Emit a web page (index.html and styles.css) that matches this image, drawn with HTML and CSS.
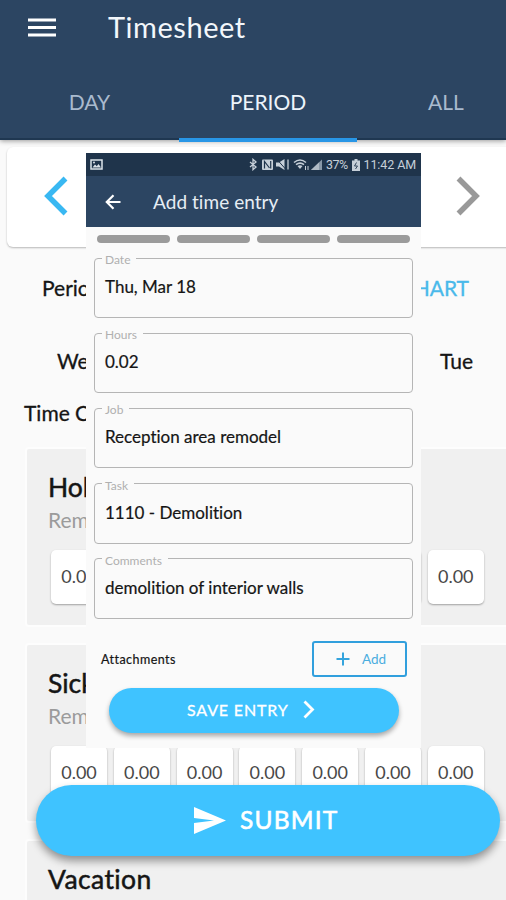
FILE: index.html
```html
<!DOCTYPE html>
<html lang="en">
<head>
<meta charset="utf-8">
<title>Timesheet</title>
<link rel="stylesheet" href="styles.css">
</head>
<body>
<div class="screen">
  <header class="header">
    <div class="titlebar">
      <svg class="menu" viewBox="0 0 28 20"><path d="M0 2h28M0 9.500h28M0 17h28" stroke="#fff" stroke-width="3"/></svg>
      <h1 class="title">Timesheet</h1>
    </div>
    <nav class="tabs">
      <span class="tab">DAY</span>
      <span class="tab active">PERIOD</span>
      <span class="tab">ALL</span>
    </nav>
  </header>

  <section class="pager">
    <svg class="chev" viewBox="0 0 24 40"><path d="M21.500 2.500L4 20l17.500 17.500" fill="none" stroke="#39b8f2" stroke-width="5.500"/></svg>
    <svg class="chev" viewBox="0 0 24 40"><path d="M2.500 2.500L20 20L2.500 37.500" fill="none" stroke="#999" stroke-width="5.500"/></svg>
  </section>

  <div class="summary"><span class="period">Perio</span><span class="chart">HART</span></div>
  <div class="days"><span class="wed">We</span><span class="tue">Tue</span></div>
  <div class="code">Time C</div>

  <section class="card">
    <h2 class="name">Hol</h2>
    <p class="remain">Rem</p>
    <div class="cells"><span>0.00</span><span></span><span></span><span></span><span></span><span></span><span>0.00</span></div>
  </section>
  <section class="card">
    <h2 class="name">Sick</h2>
    <p class="remain">Rem</p>
    <div class="cells"><span>0.00</span><span>0.00</span><span>0.00</span><span>0.00</span><span>0.00</span><span>0.00</span><span>0.00</span></div>
  </section>
  <section class="card">
    <h2 class="name wide">Vacation</h2>
  </section>

  <section class="entry">
    <div class="status">
      <svg class="pic" viewBox="0 0 13 11"><rect x="1" y="1" width="11" height="9" fill="none" stroke="#dce3ea" stroke-width="1.500"/><path d="M2.500 8.500L5 5.500l1.800 1.700L8.500 5l2.500 3.500z" fill="#dce3ea"/><circle cx="4" cy="3.500" r="1" fill="#dce3ea"/></svg>
      <svg class="sysicons" viewBox="0 0 74 13">
        <g fill="none" stroke="#c6cfd8" stroke-width="1.300">
          <path d="M1 4l6 5-3 2.700V1.300L7 4 1 9"/>
          <path d="M39 1.500v10"/>
          <path d="M45 4.500q6-5 12 0M47 6.700q4-3.300 8 0" stroke-width="1.600"/>
          <path d="M56.500 8v4M59 8v4" stroke-width="1"/>
        </g>
        <rect x="13" y="1.500" width="11" height="10.500" rx="1" fill="#c6cfd8"/>
        <path d="M15.500 10.500V3.500l5 6.500M21.700 3v7.500" fill="none" stroke="#1f344b" stroke-width="1.200"/>
        <path d="M27 4.500h3L35.500 1v11L30 8.500h-3zM48.500 8q2.500-1.500 5 0L51 11z" fill="#c6cfd8"/>
        <path d="M28 1.500l9 10" stroke="#1f344b" stroke-width="1"/>
        <path d="M73 1.500V12H62z" fill="#8797a7"/><path d="M70 4.500V12h-8z" fill="#b0bbc6"/>
      </svg>
      <span class="stat pct">37%</span>
      <svg class="batt" viewBox="0 0 8 12"><path d="M0 1.500h2.500V0h3v1.500H8V12H0z" fill="#c6cfd8"/><path d="M4.500 3.500L2.500 7h3l-2 3" fill="none" stroke="#33475c"/></svg>
      <span class="stat">11:42 AM</span>
    </div>
    <div class="appbar">
      <svg class="back" viewBox="0 0 16 16"><path d="M15.500 8H2M8.500 1.300L1.800 8l6.700 6.700" fill="none" stroke="#fff" stroke-width="2.200"/></svg>
      <span class="heading">Add time entry</span>
    </div>
    <div class="steps"><i></i><i></i><i></i><i></i></div>
    <div class="form">
      <fieldset class="field"><legend>Date</legend><span>Thu, Mar 18</span></fieldset>
      <fieldset class="field"><legend>Hours</legend><span>0.02</span></fieldset>
      <fieldset class="field"><legend>Job</legend><span>Reception area remodel</span></fieldset>
      <fieldset class="field"><legend>Task</legend><span>1110 - Demolition</span></fieldset>
      <fieldset class="field"><legend>Comments</legend><span>demolition of interior walls</span></fieldset>
    </div>
    <div class="attach">
      <span class="attlabel">Attachments</span>
      <span class="add"><svg class="plus" viewBox="0 0 14 14"><path d="M7 .5v13M.5 7h13" stroke="#35a4dd" stroke-width="2"/></svg>Add</span>
    </div>
    <div class="save">SAVE ENTRY<svg class="next" viewBox="0 0 12 19"><path d="M1.500 1.500l8 8-8 8" fill="none" stroke="#fff" stroke-width="2.800"/></svg></div>
  </section>

  <div class="submit"><svg class="send" viewBox="0 0 32 27"><path d="M0 0l32 13.500L0 27V16l20-2.500L0 11z" fill="#fff"/></svg>SUBMIT</div>
</div>
</body>
</html>
```
FILE: styles.css
```css
* { box-sizing: border-box; margin: 0; padding: 0; }
body { font-family: Lato, "Noto Sans", sans-serif; font-variant-ligatures: none; background: #fafafa; color: #151515; overflow: hidden; }
svg { display: block; flex: none; }
span { white-space: nowrap; }
.screen { position: relative; width: 506px; height: 900px; overflow: hidden; }

.header { height: 140px; background: #2c4562; border-bottom: 2px solid #1f3751; box-shadow: 0 1px 5px #0006; }
.titlebar { display: flex; height: 66px; padding-left: 28px; }
.menu { width: 28px; height: 20px; margin-top: 18px; }
.title { margin-left: 52px; font-size: 29px; line-height: 54px; font-weight: 400; letter-spacing: .550px; color: #f3f7fb; }
.tabs { display: grid; grid-template-columns: 179px 178px 178px; height: 74px; }
.tab { text-align: center; line-height: 72px; font-size: 21px; color: #a9bace; }
.tab.active { color: #edf4fb; border-bottom: 4px solid #2896e6; }

.pager { display: flex; justify-content: space-between; width: 520px; height: 100px; margin: 7px 0 0 7px; padding: 29px 47px 0 37px; background: #fff; border-radius: 6px; box-shadow: 0 1px 2px #0004; }
.chev { width: 24px; height: 40px; }

.summary { display: flex; justify-content: space-between; height: 42px; margin-top: 20px; padding: 0 37px 0 42px; font-size: 21px; line-height: 42px; -webkit-text-stroke: .3px; }
.chart { color: #49b9ea; }
.days { display: flex; justify-content: space-between; margin-top: 31px; height: 42px; padding: 0 33px 0 57px; font-size: 21px; line-height: 41px; -webkit-text-stroke: .3px; }
.code { height: 40px; margin: 11px 0 0 24px; font-size: 21px; line-height: 40px; -webkit-text-stroke: .3px; }

.card { width: 500px; height: 180px; margin: 16px 0 0 25px; padding: 20px 0 0 21px; background: #f0f0f0; border: 2px solid #fdfdfd; border-radius: 4px; }
.code + .card { margin-top: 14px; }
.name { font-size: 26.500px; line-height: 36px; font-weight: 400; -webkit-text-stroke: .5px; }
.name.wide { letter-spacing: .4px; }
.remain { font-size: 21px; line-height: 30px; color: #9b9b9b; }
.cells { display: flex; gap: 6.800px; margin: 15px 0 0 3px; }
.cells span { width: 56px; height: 54px; background: #fff; border-radius: 5px; box-shadow: 0 1px 2px #0005; text-align: center; font-size: 18px; line-height: 53px; color: #484848; }

.entry { position: absolute; left: 86px; top: 153px; width: 335px; height: 595px; background: #fafafa; }
.status { display: flex; align-items: center; height: 23px; padding: 0 5px 0 4px; background: #1f344b; }
.pic { width: 13px; height: 11px; margin-right: auto; }
.sysicons { width: 74px; height: 13px; margin-right: 3px; }
.batt { width: 8px; height: 12px; margin: 0 4px; }
.stat { font-family: Roboto, sans-serif; font-size: 12.500px; letter-spacing: -.1px; color: #c6cfd8; }
.pct { letter-spacing: -.6px; }
.appbar { display: flex; align-items: center; height: 51px; padding-left: 19px; background: #2c4562; }
.back { width: 16px; height: 16px; }
.heading { margin-left: 32px; font-size: 19px; color: #e6edf4; letter-spacing: .050px; }
.steps { display: flex; gap: 7px; padding: 8px 11px 0; }
.steps i { flex: 1; height: 8px; border-radius: 4px; background: #9b9b9b; }

.form { display: grid; gap: 8.200px; padding: 8px 8px 0; }
.field { height: 67px; border: 1.500px solid #b5b5b5; border-radius: 4px; padding: 0 10px; }
.field legend { height: 14px; margin-left: -3px; padding: 0 6px 0 3px; font-size: 12px; line-height: 18px; color: #b0b0b0; }
.field span { display: block; font-size: 17px; line-height: 24px; margin-top: 10px; -webkit-text-stroke: .2px; }

.attach { display: flex; justify-content: space-between; align-items: center; margin-top: 22px; padding: 0 14px 0 15px; }
.attlabel { font-size: 12.500px; letter-spacing: .450px; -webkit-text-stroke: .2px; padding-top: 2px; }
.add { display: flex; align-items: center; width: 95px; height: 36px; padding-left: 22px; border: 2px solid #319fdd; border-radius: 3px; font-size: 13.500px; color: #4aaddf; }
.plus { width: 14px; height: 14px; margin-right: 12px; }
.save { display: flex; align-items: center; width: 290px; height: 45px; margin: 11px 0 0 23px; padding: 0 0 1px 78px; border-radius: 23px; background: #3fc3ff; box-shadow: 0 3px 5px #0005; color: #fff; font-size: 16px; letter-spacing: .850px; -webkit-text-stroke: .3px; }
.next { width: 12px; height: 19px; margin-left: 14px; }

.submit { position: absolute; left: 36px; top: 785px; display: flex; align-items: center; width: 464px; height: 71px; padding: 0 0 3px 158px; border-radius: 36px; background: #3fc3ff; box-shadow: 0 5px 9px #0006; color: #fff; font-size: 24.500px; -webkit-text-stroke: .6px; letter-spacing: 1.200px; }
.send { width: 32px; height: 27px; margin: 2px 14px 0 0; }
```
